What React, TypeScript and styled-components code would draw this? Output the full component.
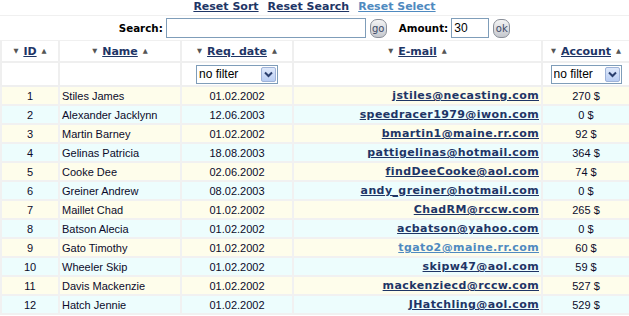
import React from 'react';
import styled, { createGlobalStyle } from 'styled-components';

const GlobalStyle = createGlobalStyle`
  html, body {
    margin: 0;
    padding: 0;
    background: #ffffff;
  }
`;

const Page = styled.div`
  width: 629px;
  font-family: "DejaVu Sans", Verdana, sans-serif;
  font-size: 11px;
  color: #0b0b2a;
`;

const TopLinks = styled.div`
  display: flex;
  justify-content: center;
  gap: 9px;
  height: 15px;
  line-height: 13px;
  border-bottom: 1px solid #f0f0f0;
`;

const Link = styled.a<{ $light?: boolean }>`
  font-family: "DejaVu Sans", Verdana, sans-serif;
  font-weight: bold;
  font-size: 11px;
  color: ${(p) => (p.$light ? '#4f8ac0' : '#1e3566')};
  text-decoration: underline;
  cursor: pointer;
`;

const SearchBar = styled.div`
  display: flex;
  align-items: center;
  justify-content: center;
  height: 24px;
  border-bottom: 1px solid #f0f0f0;
`;

const Label = styled.span`
  font-weight: bold;
  font-size: 10.3px;
  margin-right: 3px;
  color: #000;
`;

const TextInput = styled.input<{ $w: number }>`
  box-sizing: border-box;
  width: ${(p) => p.$w}px;
  height: 20px;
  border: 1px solid #7f9db9;
  padding: 0 2px;
  font-family: "Liberation Sans", Tahoma, sans-serif;
  font-size: 12px;
  color: #000;
`;

const RoundButton = styled.button`
  box-sizing: border-box;
  width: 17px;
  height: 19px;
  margin: 0 12px 0 4px;
  padding: 0;
  border: 1px solid #8a8f99;
  border-radius: 7px;
  background: linear-gradient(#f4f4f4, #c5c8ce);
  font-family: "DejaVu Sans", Verdana, sans-serif;
  font-size: 10px;
  color: #3c4a66;
  &:last-child {
    margin-right: 0;
  }
`;

const Table = styled.table`
  width: 629px;
  border-collapse: collapse;
  table-layout: fixed;
`;

const Col = styled.col<{ $w: number }>`
  width: ${(p) => p.$w}px;
`;

const HeadCell = styled.th`
  height: 20px;
  padding: 0;
  border: 2px solid #efefef;
  border-top: none;
  text-align: center;
  font-weight: normal;
  white-space: nowrap;
`;

const FilterCell = styled.td`
  height: 22px;
  padding: 0;
  border: 2px solid #efefef;
  text-align: center;
`;

const Arrow = styled.span`
  font-size: 6.5px;
  color: #555;
  vertical-align: 2px;
  margin: 0 5px;
`;

const SelectBox = styled.div<{ $w: number }>`
  position: relative;
  display: inline-block;
  box-sizing: border-box;
  width: ${(p) => p.$w}px;
  height: 19px;
  border: 1px solid #7f9db9;
  background: #fff;
  vertical-align: middle;
`;

const Select = styled.select`
  appearance: none;
  width: 100%;
  height: 100%;
  border: none;
  background: transparent;
  padding: 0 2px;
  font-family: "Liberation Sans", Tahoma, sans-serif;
  font-size: 12px;
  color: #000;
`;

const DropButton = styled.span`
  position: absolute;
  top: 1px;
  right: 1px;
  width: 15px;
  height: 15px;
  box-sizing: border-box;
  border: 1px solid #9fb3d8;
  border-radius: 2px;
  background: linear-gradient(#dfe9fb, #b9cdf3);
  display: flex;
  align-items: center;
  justify-content: center;
  pointer-events: none;
`;

const Row = styled.tr<{ $odd: boolean }>`
  background: ${(p) => (p.$odd ? '#fefdeb' : '#edfdfd')};
`;

const Cell = styled.td<{ $align?: string }>`
  height: 17px;
  padding: 0 2px;
  border: 2px solid #f1f1f1;
  text-align: ${(p) => p.$align || 'left'};
  font-family: "Liberation Sans", Tahoma, sans-serif;
  font-size: 11px;
  white-space: nowrap;
  overflow: hidden;
`;

const MailLink = styled(Link)`
  letter-spacing: 0.4px;
`;

type Person = {
  id: number;
  name: string;
  date: string;
  mail: string;
  account: number;
};

const people: Person[] = [
  { id: 1, name: 'Stiles James', date: '01.02.2002', mail: 'jstiles@necasting.com', account: 270 },
  { id: 2, name: 'Alexander Jacklynn', date: '12.06.2003', mail: 'speedracer1979@iwon.com', account: 0 },
  { id: 3, name: 'Martin Barney', date: '01.02.2002', mail: 'bmartin1@maine.rr.com', account: 92 },
  { id: 4, name: 'Gelinas Patricia', date: '18.08.2003', mail: 'pattigelinas@hotmail.com', account: 364 },
  { id: 5, name: 'Cooke Dee', date: '02.06.2002', mail: 'findDeeCooke@aol.com', account: 74 },
  { id: 6, name: 'Greiner Andrew', date: '08.02.2003', mail: 'andy_greiner@hotmail.com', account: 0 },
  { id: 7, name: 'Maillet Chad', date: '01.02.2002', mail: 'ChadRM@rccw.com', account: 265 },
  { id: 8, name: 'Batson Alecia', date: '01.02.2002', mail: 'acbatson@yahoo.com', account: 0 },
  { id: 9, name: 'Gato Timothy', date: '01.02.2002', mail: 'tgato2@maine.rr.com', account: 60 },
  { id: 10, name: 'Wheeler Skip', date: '01.02.2002', mail: 'skipw47@aol.com', account: 59 },
  { id: 11, name: 'Davis Mackenzie', date: '01.02.2002', mail: 'mackenziecd@rccw.com', account: 527 },
  { id: 12, name: 'Hatch Jennie', date: '01.02.2002', mail: 'JHatchling@aol.com', account: 529 },
];

const columns = [
  { title: 'ID', w: 58 },
  { title: 'Name', w: 122 },
  { title: 'Req. date', w: 112 },
  { title: 'E-mail', w: 249 },
  { title: 'Account', w: 88 },
];

function FilterSelect({ w }: { w: number }) {
  return (
    <SelectBox $w={w}>
      <Select defaultValue="none">
        <option value="none">no filter</option>
      </Select>
      <DropButton>
        <svg width="9" height="7" viewBox="0 0 9 7">
          <path d="M1 1.5 L4.5 5 L8 1.5" fill="none" stroke="#2a3f6e" strokeWidth="2" />
        </svg>
      </DropButton>
    </SelectBox>
  );
}

export default function App() {
  return (
    <>
      <GlobalStyle />
      <Page>
        <TopLinks>
          <Link>Reset Sort</Link>
          <Link>Reset Search</Link>
          <Link $light>Reset Select</Link>
        </TopLinks>

        <SearchBar>
          <Label>Search:</Label>
          <TextInput $w={200} />
          <RoundButton>go</RoundButton>
          <Label>Amount:</Label>
          <TextInput $w={38} defaultValue="30" />
          <RoundButton>ok</RoundButton>
        </SearchBar>

        <Table>
          <colgroup>
            {columns.map((c) => (
              <Col key={c.title} $w={c.w} />
            ))}
          </colgroup>
          <thead>
            <tr>
              {columns.map((c) => (
                <HeadCell key={c.title}>
                  <Arrow>▼</Arrow>
                  <Link>{c.title}</Link>
                  <Arrow>▲</Arrow>
                </HeadCell>
              ))}
            </tr>
            <tr>
              <FilterCell />
              <FilterCell />
              <FilterCell>
                <FilterSelect w={82} />
              </FilterCell>
              <FilterCell />
              <FilterCell>
                <FilterSelect w={71} />
              </FilterCell>
            </tr>
          </thead>
          <tbody>
            {people.map((p, i) => (
              <Row key={p.id} $odd={i % 2 === 0}>
                <Cell $align="center">{p.id}</Cell>
                <Cell>{p.name}</Cell>
                <Cell $align="center">{p.date}</Cell>
                <Cell $align="right">
                  <MailLink $light={p.id === 9}>{p.mail}</MailLink>
                </Cell>
                <Cell $align="center">{p.account} $</Cell>
              </Row>
            ))}
          </tbody>
        </Table>
      </Page>
    </>
  );
}
